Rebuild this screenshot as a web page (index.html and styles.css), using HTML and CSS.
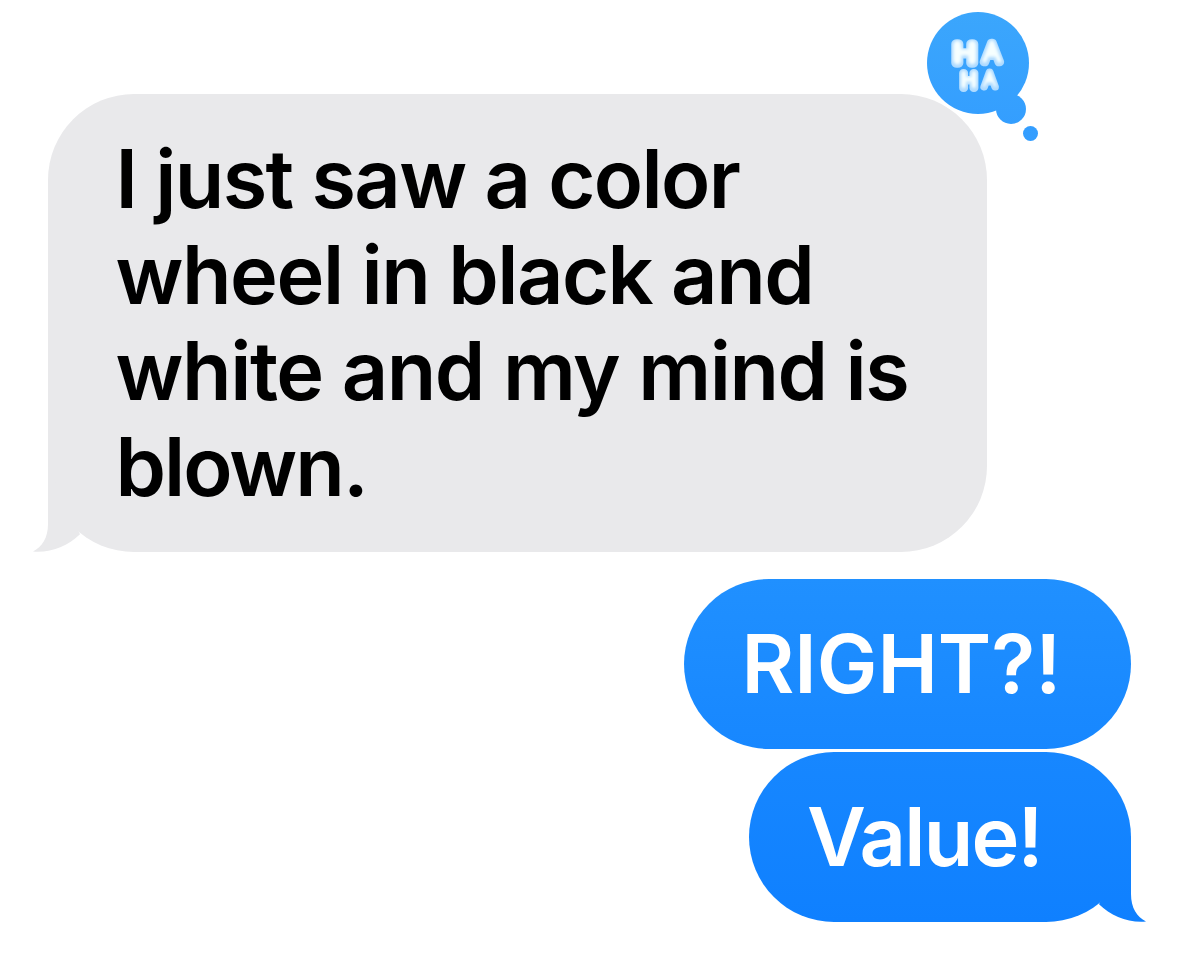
FILE: index.html
```
<!DOCTYPE html>
<html lang="en">
<head>
    <title>Messages</title>
    <meta charset="utf-8">
    <link rel="stylesheet" href="styles.css">
</head>
<body>

    <div class="chat">

        <!-- Received message -->
        <div class="bubble received">
            <span class="line line1">I just saw a color</span>
            <span class="line line2">wheel in black and</span>
            <span class="line line3">white and my mind is</span>
            <span class="line line4">blown.</span>

            <svg class="tail" width="47" height="90" viewBox="0 0 47 90">
                <path d="M15 4V62C15 76 9 85 0 89.500C18 91 35 84 47 72.200Z"/>
            </svg>

            <!-- Haha reaction -->
            <svg class="reaction" width="120" height="136" viewBox="0 0 120 136">
                <defs>
                    <linearGradient id="blue" x1="0" y1="6" x2="0" y2="136" gradientUnits="userSpaceOnUse">
                        <stop offset="0" stop-color="#3ba6fc"/>
                        <stop offset="1" stop-color="#339dff"/>
                    </linearGradient>
                    <!-- puffy letters: white highlight inside the pale blue shape -->
                    <filter id="puffy" x="-20%" y="-20%" width="140%" height="140%" color-interpolation-filters="sRGB">
                        <feMorphology in="SourceAlpha" operator="erode" radius="1.5" result="core"/>
                        <feGaussianBlur in="core" stdDeviation="1.5" result="blurred"/>
                        <feOffset in="blurred" dx="0.300" dy="-1.500" result="moved"/>
                        <feFlood flood-color="#f6ffff"/>
                        <feComposite in2="moved" operator="in" result="light"/>
                        <feComposite in="light" in2="SourceGraphic" operator="atop"/>
                    </filter>
                </defs>
                <circle cx="57" cy="57" r="54" fill="#fff"/>
                <g fill="url(#blue)">
                    <circle cx="57" cy="57" r="51"/>
                    <circle cx="90" cy="103" r="15"/>
                    <circle cx="109.500" cy="127.500" r="7.500"/>
                </g>
                <g class="haha" filter="url(#puffy)">
                    <text class="big" transform="translate(32.500 56.500) scale(1.140 0.970)">H</text>
                    <text class="big a" transform="translate(62.300 55.500) scale(1 0.970)">A</text>
                    <text class="small" transform="translate(40 82) scale(1.060 1)">H</text>
                    <text class="small a" transform="translate(62.300 81)">A</text>
                </g>
            </svg>
        </div>

        <!-- Sent messages -->
        <div class="bubble sent first">
            <span class="line line5">RIGHT?!</span>
        </div>
        <div class="bubble sent last">
            <span class="line line6">Value!</span>
            <svg class="tail" width="47" height="90" viewBox="0 0 47 90">
                <defs>
                    <linearGradient id="sentBlue" x1="0" y1="-80" x2="0" y2="90" gradientUnits="userSpaceOnUse">
                        <stop offset="0" stop-color="#1787ff"/>
                        <stop offset="1" stop-color="#0f80ff"/>
                    </linearGradient>
                </defs>
                <path fill="url(#sentBlue)" d="M32 4V62C32 76 38 85 47 89.500C29 91 12 84 0 72.200Z"/>
            </svg>
        </div>

    </div>

</body>
</html>
```
FILE: styles.css
```
body {
    margin: 0;
    background-color: #fff;
    font-family: Inter, "Liberation Sans", sans-serif;
}

.chat {
    display: flex;
    flex-direction: column;
    box-sizing: border-box;
    height: 978px;
    padding: 94px 48px 0;
}

.bubble {
    position: relative;
    box-sizing: border-box;
    font-size: 81px;
    font-weight: 600;
    line-height: 96px;
}

.line {
    display: block;
    white-space: nowrap;
}

.received {
    width: 939px;
    height: 458px;
    padding: 37px 0 0 67.5px;
    border-radius: 86px;
    background-color: #e9e9eb;
    color: #000;
}

.sent {
    align-self: flex-end;
    height: 170px;
    padding-top: 37px;
    border-radius: 85px;
    color: #fff;
}

.first {
    width: 447px;
    margin-top: 27px;
    padding-left: 57.5px;
    background: linear-gradient(#2090ff, #1787ff);
}

.last {
    width: 382px;
    margin-top: 3px;
    padding-left: 58px;
    background: linear-gradient(#1787ff, #0f80ff);
}

/* letter widths */
.line1 { letter-spacing: -1.6px; }
.line2 { letter-spacing: -1.5px; }
.line3 { letter-spacing: -1.45px; }
.line4 { letter-spacing: -2px; }
.line5 { letter-spacing: 0; }
.line6 { letter-spacing: -1.8px; }

/* bubble tails */
.tail {
    position: absolute;
    bottom: 0;
}

.received .tail {
    left: -15px;
    fill: #e9e9eb;
}

.sent .tail {
    right: -15px;
}

/* reaction badge */
.reaction {
    position: absolute;
    left: 873px;
    top: -88px;
}

.haha {
    font-weight: 100;
    fill: #addaff;
    stroke: #addaff;
    stroke-linejoin: round;
    stroke-linecap: round;
}

.big {
    font-size: 27px;
    stroke-width: 10px;
}

.small {
    font-size: 20px;
    stroke-width: 8px;
}

.big.a {
    stroke-width: 9px;
}

.small.a {
    stroke-width: 7px;
}
```
